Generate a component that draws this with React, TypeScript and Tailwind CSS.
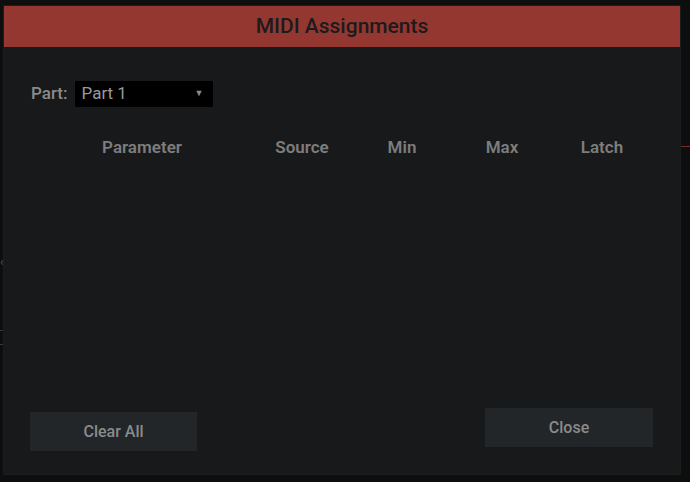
import React from 'react';

export default function App() {
  const columns = [
    { label: "Source", width: "w-[100px]" },
    { label: "Min", width: "w-[100px]" },
    { label: "Max", width: "w-[100px]" },
    { label: "Latch", width: "w-[100px]" },
  ];

  return (
    <div className="relative w-[690px] h-[482px] bg-[#0d0e0e] overflow-hidden font-['Roboto',sans-serif]">
      {/* bits of the app behind the dialog */}
      <div className="absolute left-0 top-[256px] text-[#555] text-[12px] leading-none">‹</div>
      <div className="absolute left-0 top-[330px] w-[3px] h-px bg-[#3a3a3a]" />
      <div className="absolute left-0 top-[344px] w-[3px] h-px bg-[#3a3a3a]" />
      <div className="absolute right-0 top-[146px] w-[9px] h-px bg-[#7a2a26]" />

      {/* Dialog */}
      <div className="absolute left-[3px] top-[5px] w-[678px] h-[470px] bg-[#18191b] border border-[#1b1c1e] flex flex-col">
        <div className="h-[41px] bg-[#943731] flex items-center justify-center">
          <h1 className="text-[21px] font-medium text-[#1b1b1c]">MIDI Assignments</h1>
        </div>

        <div className="flex items-center pl-[27px] mt-[34px]">
          <span className="text-[17px] font-medium text-[#8b8b8b]">Part:</span>
          <div className="ml-[7px] w-[138px] h-[26px] bg-black flex items-center justify-between pl-[7px] pr-[9px]">
            <span className="text-[17px] text-[#9a9a9a]">Part 1</span>
            <span className="text-[9px] text-[#8c8c8c]">▼</span>
          </div>
        </div>

        <div className="flex items-center pl-[38px] mt-[28px] text-[17px] font-semibold text-[#7d7d7d]">
          <div className="w-[200px] text-center">Parameter</div>
          <div className="w-[10px]" />
          {columns.map((c) => (
            <div key={c.label} className={`${c.width} text-center`}>{c.label}</div>
          ))}
        </div>

        <div className="flex-1" />

        <div className="flex items-end justify-between pl-[26px] pr-[27px] pb-[23px]">
          <button className="w-[167px] h-[39px] bg-[#232628] text-[16px] font-medium text-[#8b8b8b]">Clear All</button>
          <button className="w-[168px] h-[39px] mb-[4px] bg-[#232628] text-[16px] font-medium text-[#8b8b8b]">Close</button>
        </div>
      </div>
    </div>
  );
}
